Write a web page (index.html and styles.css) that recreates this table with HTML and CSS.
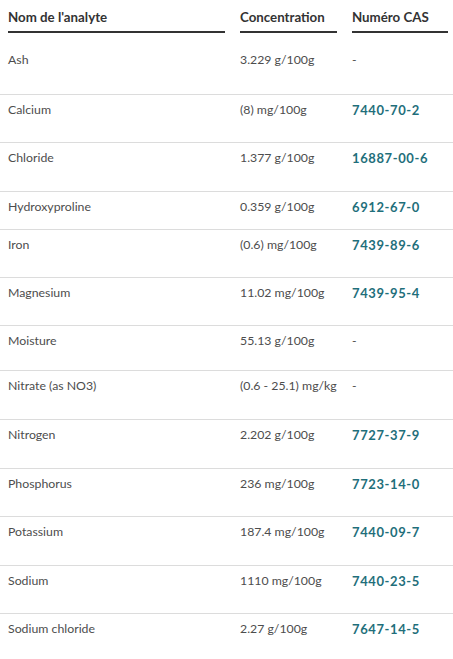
FILE: index.html
```html
<!DOCTYPE html>
<html lang="fr">
<head>
<meta charset="utf-8">
<link rel="stylesheet" href="styles.css">
</head>
<body>
<div class="table">
  <div class="row head">
    <div class="th">Nom de l'analyte</div>
    <div class="th">Concentration</div>
    <div class="th">Numéro CAS</div>
  </div>
  <div class="row first"><div>Ash</div><div>3.229 g/100g</div><div class="dash">-</div></div>
  <div class="row"><div>Calcium</div><div>(8) mg/100g</div><div class="cas">7440-70-2</div></div>
  <div class="row"><div>Chloride</div><div>1.377 g/100g</div><div class="cas">16887-00-6</div></div>
  <div class="row short"><div>Hydroxyproline</div><div>0.359 g/100g</div><div class="cas">6912-67-0</div></div>
  <div class="row"><div>Iron</div><div>(0.6) mg/100g</div><div class="cas">7439-89-6</div></div>
  <div class="row mg"><div>Magnesium</div><div>11.02 mg/100g</div><div class="cas">7439-95-4</div></div>
  <div class="row mid"><div>Moisture</div><div>55.13 g/100g</div><div class="dash">-</div></div>
  <div class="row"><div>Nitrate (as NO3)</div><div>(0.6 - 25.1) mg/kg</div><div class="dash">-</div></div>
  <div class="row"><div>Nitrogen</div><div>2.202 g/100g</div><div class="cas">7727-37-9</div></div>
  <div class="row"><div>Phosphorus</div><div>236 mg/100g</div><div class="cas">7723-14-0</div></div>
  <div class="row"><div>Potassium</div><div>187.4 mg/100g</div><div class="cas">7440-09-7</div></div>
  <div class="row"><div>Sodium</div><div>1110 mg/100g</div><div class="cas">7440-23-5</div></div>
  <div class="row"><div>Sodium chloride</div><div>2.27 g/100g</div><div class="cas">7647-14-5</div></div>
</div>
</body>
</html>
```
FILE: styles.css
```css
html, body {
  margin: 0;
  padding: 0;
  background: #fff;
}
body {
  font-family: "Lato", "Open Sans", sans-serif;
  font-size: 12.3px;
  color: #4d4d4d;
}
.row {
  display: grid;
  grid-template-columns: 217px 97px 96px;
  column-gap: 15px;
  padding: 6px 5px 0 8px;
  height: 48.6px;
  box-sizing: border-box;
  border-top: 1px solid #dcdcdc;
  line-height: 18px;
  align-items: start;
  white-space: nowrap;
}
.row.head {
  border-top: none;
  padding-top: 0;
  height: 33px;
  align-items: stretch;
}
.th {
  font-size: 13.3px;
  font-weight: 700;
  color: #333;
  border-bottom: 2px solid #333;
  padding-top: 8px;
  box-sizing: border-box;
  height: 33px;
}
.row.first {
  border-top: none;
  padding-top: 18px;
  height: 60.7px;
}
.row.short { height: 38px; }
.row.mg { height: 48px; }
.row.mid { height: 45px; }
.cas {
  font-size: 13px;
  font-weight: 700;
  color: #1f6f7b;
  letter-spacing: 0.6px;
}
```
